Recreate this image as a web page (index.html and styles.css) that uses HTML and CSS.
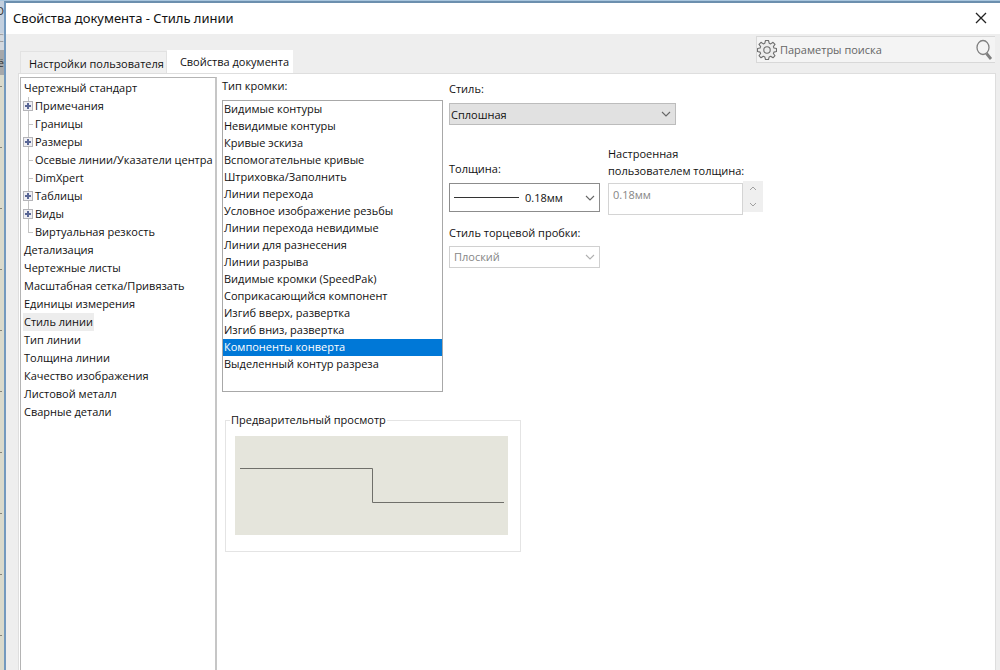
FILE: index.html
```html
<!DOCTYPE html>
<html lang="ru">
<head>
<meta charset="utf-8">
<title>Свойства документа - Стиль линии</title>
<link rel="stylesheet" href="styles.css">
</head>
<body>
<div class="app-edge" aria-hidden="true">
  <div class="edge-menu">О</div>
  <div class="edge-toolbar">С</div>
  <div class="edge-tab">ё</div>
  <div class="edge-ruler"></div>
</div>
<main class="dialog">
  <header class="titlebar">
    <h1 class="title">Свойства документа - Стиль линии</h1>
    <button class="close" type="button" aria-label="Закрыть">
      <svg width="12" height="12" viewBox="0 0 12 12"><path d="M1 1L11 11M11 1L1 11" fill="none" stroke="#222" stroke-width="1.3"/></svg>
    </button>
  </header>
  <div class="top">
    <nav class="tabs">
      <button class="tab" type="button">Настройки пользователя</button>
      <button class="tab tab-active" type="button">Свойства документа</button>
    </nav>
    <div class="search">
      <svg width="20" height="22" viewBox="1 0 20 22" fill="#ececec" stroke="#6e6e6e" stroke-width="1.1" stroke-linejoin="round">
        <path d="M9.500 1.500H12.500L13.200 4.200L14.700 4.900L17 3.300L19 5.400L17.400 7.500L17.900 9L20.500 9.500V12.500L17.900 13.100L17.400 14.500L19 16.700L17 18.800L14.700 17.200L13.200 17.900L12.500 20.500H9.500L8.800 17.900L7.300 17.200L5 18.800L3 16.700L4.600 14.500L4.100 13.100L1.500 12.500V9.500L4.100 9L4.600 7.500L3 5.400L5 3.300L7.300 4.900L8.800 4.200Z"/>
        <circle cx="11" cy="11" r="3.200"/>
      </svg>
      <input class="search-input" type="text" placeholder="Параметры поиска" aria-label="Параметры поиска">
      <svg width="20" height="22" viewBox="0 0 20 22" fill="none" stroke="#808080">
        <ellipse cx="8" cy="8.500" rx="6" ry="7" stroke-width="1.3"/>
        <path d="M11.500 14.500L16 20" stroke-width="2.800"/>
      </svg>
    </div>
  </div>
  <div class="pane">
    <ul class="tree">
      <li>Чертежный стандарт
        <ul class="branch">
          <li><button class="expand" type="button" aria-label="Развернуть"></button>Примечания</li>
          <li>Границы</li>
          <li><button class="expand" type="button" aria-label="Развернуть"></button>Размеры</li>
          <li>Осевые линии/Указатели центра</li>
          <li>DimXpert</li>
          <li><button class="expand" type="button" aria-label="Развернуть"></button>Таблицы</li>
          <li><button class="expand" type="button" aria-label="Развернуть"></button>Виды</li>
          <li>Виртуальная резкость</li>
        </ul>
      </li>
      <li>Детализация</li>
      <li>Чертежные листы</li>
      <li>Масштабная сетка/Привязать</li>
      <li>Единицы измерения</li>
      <li><span class="current">Стиль линии</span></li>
      <li>Тип линии</li>
      <li>Толщина линии</li>
      <li>Качество изображения</li>
      <li>Листовой металл</li>
      <li>Сварные детали</li>
    </ul>
    <div class="content">
      <div class="columns">
        <div class="edges">
          <label for="edge-type">Тип кромки:</label>
          <select class="listbox" id="edge-type" size="17">
            <option>Видимые контуры</option>
            <option>Невидимые контуры</option>
            <option>Кривые эскиза</option>
            <option>Вспомогательные кривые</option>
            <option>Штриховка/Заполнить</option>
            <option>Линии перехода</option>
            <option>Условное изображение резьбы</option>
            <option>Линии перехода невидимые</option>
            <option>Линии для разнесения</option>
            <option>Линии разрыва</option>
            <option>Видимые кромки (SpeedPak)</option>
            <option>Соприкасающийся компонент</option>
            <option>Изгиб вверх, развертка</option>
            <option>Изгиб вниз, развертка</option>
            <option selected>Компоненты конверта</option>
            <option>Выделенный контур разреза</option>
          </select>
        </div>
        <div class="settings">
          <div class="field field-style">
            <label for="style">Стиль:</label>
            <div class="combo">
              <select class="combo-box combo-grey" id="style"><option>Сплошная</option></select>
              <svg class="chevron" width="10" height="6" viewBox="0 0 10 6"><path d="M1 1L5 5L9 1"/></svg>
            </div>
          </div>
          <div class="thickness-row">
            <div class="field field-narrow">
              <label for="thickness">Толщина:</label>
              <div class="combo">
                <select class="combo-box combo-line" id="thickness"><option>0.18мм</option></select>
                <span class="sample"></span>
                <svg class="chevron" width="10" height="6" viewBox="0 0 10 6"><path d="M1 1L5 5L9 1"/></svg>
              </div>
            </div>
            <div class="field field-custom">
              <label for="custom">Настроенная<br>пользователем толщина:</label>
              <div class="spin">
                <input class="spin-input" id="custom" type="text" value="0.18мм" disabled>
                <div class="spin-buttons">
                  <button class="spin-button" type="button" disabled aria-label="Больше"><svg width="8" height="5" viewBox="0 0 8 5"><path d="M1 4L4 1L7 4"/></svg></button>
                  <button class="spin-button" type="button" disabled aria-label="Меньше"><svg width="8" height="5" viewBox="0 0 8 5"><path d="M1 1L4 4L7 1"/></svg></button>
                </div>
              </div>
            </div>
          </div>
          <div class="field field-narrow">
            <label for="cap">Стиль торцевой пробки:</label>
            <div class="combo combo-disabled">
              <select class="combo-box" id="cap" disabled><option>Плоский</option></select>
              <svg class="chevron" width="10" height="6" viewBox="0 0 10 6"><path d="M1 1L5 5L9 1"/></svg>
            </div>
          </div>
        </div>
      </div>
      <fieldset class="preview">
        <legend>Предварительный просмотр</legend>
        <svg class="drawing" viewBox="0 0 273 99" role="img" aria-label="Образец линии"><path d="M5 32.500H137.500V66.500H269" fill="none" stroke="#6f6f6a" stroke-width="1"/></svg>
      </fieldset>
    </div>
  </div>
</main>
</body>
</html>
```

FILE: styles.css
```css
* {
  box-sizing: border-box;
}

body {
  margin: 0;
  height: 100vh;
  display: flex;
  overflow: hidden;
  padding-top: 1px;
  background: #a9c6de;
  color: #111;
  font: 11px/18px "Open Sans", "Noto Sans", sans-serif;
}

button,
input,
select {
  font: inherit;
  color: inherit;
  margin: 0;
}

ul {
  list-style: none;
  margin: 0;
  padding: 0;
}

/* Strip of the main application window left of the dialog */
.app-edge {
  width: 4px;
  flex: none;
  display: flex;
  flex-direction: column;
  overflow: hidden;
  color: #333;
  direction: rtl;
}

.edge-menu {
  height: 32px;
  line-height: 20px;
  background: #c3d0df;
}

.edge-toolbar {
  height: 17px;
  line-height: 10px;
  background: #d3d8de;
  color: #999;
}

.edge-tab {
  height: 25px;
  line-height: 26px;
  background: #a6a8aa;
}

.edge-ruler {
  flex: 1;
  background: repeating-linear-gradient(to bottom, #dadacc 0 11px, #85857c 11px 12px, #dadacc 12px 61px) left / 2px 100% no-repeat #dadacc;
}

.dialog {
  flex: 1;
  min-width: 0;
  display: flex;
  flex-direction: column;
  border-top: 2px solid #6c8fae;
  border-left: 2px solid #7399be;
  background: #eee;
}

.titlebar {
  height: 31px;
  flex: none;
  display: flex;
  align-items: center;
  justify-content: space-between;
  padding: 0 13px 2px 7px;
  background: #fff;
}

.title {
  margin: 0;
  font-family: "Noto Sans", sans-serif;
  font-size: 13px;
  font-weight: 400;
}

.close {
  display: flex;
  padding: 0;
  border: 0;
  background: none;
}

.top {
  height: 39px;
  flex: none;
  display: flex;
  justify-content: space-between;
  align-items: flex-end;
  padding: 0 5px 0 14px;
}

.tabs {
  display: flex;
  align-items: flex-end;
}

.tab {
  height: 22px;
  padding: 3px 2px 0 8px;
  border: 1px solid #e2e2e2;
  border-bottom: 0;
  background: #f0f0f0;
  white-space: nowrap;
}

.tab-active {
  height: 23px;
  padding: 0 3px 0 12px;
  border-color: #fff;
  background: #fff;
}

.search {
  width: 239px;
  height: 27px;
  align-self: flex-start;
  display: flex;
  align-items: center;
  margin-top: 2px;
  border: 1px solid #d8d8d8;
  border-right: 0;
  background: #f4f4f4;
}

.search-input {
  flex: 1;
  min-width: 0;
  padding: 1px 3px 0;
  border: 0;
  outline: 0;
  background: none;
}

.search-input::placeholder {
  color: #666;
  opacity: 1;
}

.pane {
  flex: 1;
  min-height: 0;
  display: flex;
  margin: 0 4px 0 12px;
  padding: 3px 0 0 1px;
  border: 1px solid #dedede;
  border-bottom: 0;
  background: #fff;
}

.tree {
  width: 197px;
  flex: none;
  padding: 1px 0 0 3px;
  border: 1px solid #b4b4b4;
  border-right: 2px solid #c6c6c6;
  border-bottom: 0;
  white-space: nowrap;
}

.current {
  display: inline-block;
  margin-left: -1px;
  padding: 0 1px;
  background: #ededed;
}

.branch li {
  position: relative;
  padding-left: 11px;
}

.branch li::before {
  content: "";
  position: absolute;
  left: 4px;
  top: 0;
  height: 18px;
  border-left: 1px solid #c4c4c4;
}

.branch li::after {
  content: "";
  position: absolute;
  left: 4px;
  top: 9px;
  width: 5px;
  border-top: 1px solid #c4c4c4;
}

.branch li:last-child::before {
  height: 9px;
}

.expand {
  position: absolute;
  z-index: 1;
  left: -1px;
  top: 4px;
  width: 10px;
  height: 10px;
  padding: 0;
  border: 1px solid #b4b4b8;
  background:
    linear-gradient(#5a6796, #5a6796) center / 6px 2px no-repeat,
    linear-gradient(#5a6796, #5a6796) center / 2px 6px no-repeat,
    #efeff4;
}

.content {
  flex: 1;
  min-width: 0;
  padding-left: 5px;
}

.columns {
  display: flex;
  gap: 6px;
}

.edges {
  width: 221px;
  flex: none;
}

.edges label,
.field label {
  display: block;
}

.listbox {
  display: block;
  width: 100%;
  height: 292px;
  margin-top: 5px;
  padding: 0;
  border: 1px solid #a8a8a8;
  border-radius: 0;
  outline: 0;
  overflow: hidden;
  background: #fff;
}

.listbox option {
  height: 17px;
  min-height: 17px;
  padding: 0 1px;
  line-height: 17px;
}

.listbox option:checked {
  background: #0078d7 linear-gradient(#0078d7, #0078d7);
  color: #fff;
}

.settings {
  display: flex;
  flex-direction: column;
  padding-top: 3px;
}

.field-style {
  width: 227px;
}

.field-narrow {
  width: 151px;
}

.combo {
  position: relative;
  margin-top: 5px;
}

.combo-box {
  display: block;
  width: 100%;
  height: 22px;
  padding: 0 4px;
  border: 1px solid #d0d0d0;
  border-radius: 0;
  appearance: none;
  background: #fff;
  opacity: 1;
}

.combo-grey {
  padding: 1px 1px 0;
  background: #e1e1e1;
  border-color: #bcbcbc;
}

.combo-line {
  height: 29px;
  padding-left: 75px;
  border-color: #8c8c8c;
}

.sample {
  position: absolute;
  left: 5px;
  top: 14px;
  width: 65px;
  border-top: 1px solid #333;
}

.chevron {
  position: absolute;
  right: 5px;
  top: 0;
  bottom: 0;
  margin: auto 0;
  fill: none;
  stroke: #666;
  stroke-width: 1.1;
  pointer-events: none;
}

.combo-disabled {
  margin-top: 4px;
  color: #868686;
}

.combo-disabled .chevron {
  stroke: #b0b0b0;
}

.thickness-row {
  display: flex;
  align-items: flex-end;
  gap: 8px;
  margin: 20px 0 9px;
}

.thickness-row .field-narrow {
  padding-bottom: 3px;
}

.field-custom label {
  line-height: 17px;
}

.spin {
  display: flex;
  margin-top: 2px;
}

.spin-input {
  width: 135px;
  height: 32px;
  margin-top: 2px;
  padding: 0 4px 9px;
  border: 1px solid #d4d4d4;
  background: #fff;
  color: #868686;
}

.spin-buttons {
  width: 20px;
  height: 31px;
  display: flex;
  flex-direction: column;
  background: #efefef;
}

.spin-button {
  flex: 1;
  display: flex;
  align-items: center;
  justify-content: center;
  padding: 0;
  border: 0;
  background: none;
}

.spin-button svg {
  fill: none;
  stroke: #a0a0a0;
}

.preview {
  width: 296px;
  margin: 19px 0 0 3px;
  padding: 7px 10px 16px 9px;
  border: 1px solid #e4e4e4;
}

.preview legend {
  margin-left: -5px;
  padding: 0 1px;
}

.drawing {
  display: block;
  width: 273px;
  background: #e5e5dc;
}
```
